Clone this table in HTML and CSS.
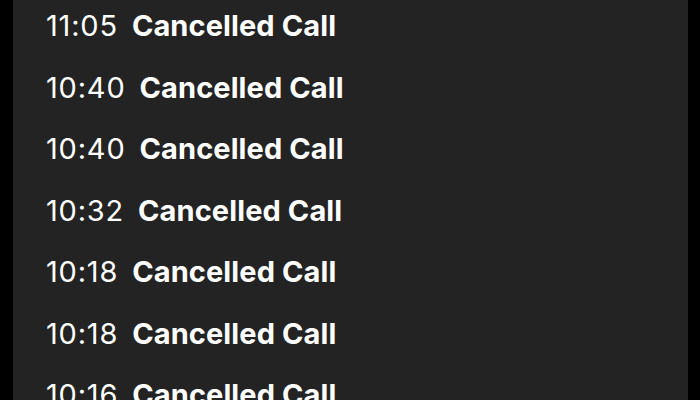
FILE: index.html
```html
<!DOCTYPE html>
<html lang="en">
<head>
    <meta charset="UTF-8">
    <title>Recent Calls</title>
    <link rel="stylesheet" href="styles.css">
</head>
<body>
    <div class="panel">
        <ul class="call-list">
            <li class="call"><span class="time">11:05</span><span class="label">Cancelled Call</span></li>
            <li class="call"><span class="time">10:40</span><span class="label">Cancelled Call</span></li>
            <li class="call"><span class="time">10:40</span><span class="label">Cancelled Call</span></li>
            <li class="call"><span class="time">10:32</span><span class="label">Cancelled Call</span></li>
            <li class="call"><span class="time">10:18</span><span class="label">Cancelled Call</span></li>
            <li class="call"><span class="time">10:18</span><span class="label">Cancelled Call</span></li>
            <li class="call"><span class="time">10:16</span><span class="label">Cancelled Call</span></li>
        </ul>
    </div>
</body>
</html>
```

FILE: styles.css
```css
html, body {
    height: 100%;
}

body {
    margin: 0;
    background: #000;
    font-family: Inter, "Noto Sans", sans-serif;
    color: #fff;
    overflow: hidden;
}

.panel {
    margin: 0 12px 0 13px;
    height: 100%;
    background: #232323;
    padding-left: 33px;
}

.call-list {
    list-style: none;
    margin: 0;
    padding: 0;
    position: relative;
    top: -5px;
}

.call {
    height: 61.5px;
    display: flex;
    align-items: center;
    font-size: 29px;
}

.time {
    font-weight: 400;
    letter-spacing: 0.8px;
}

.label {
    font-weight: 700;
    margin-left: 14px;
    letter-spacing: 0.1px;
}
```
